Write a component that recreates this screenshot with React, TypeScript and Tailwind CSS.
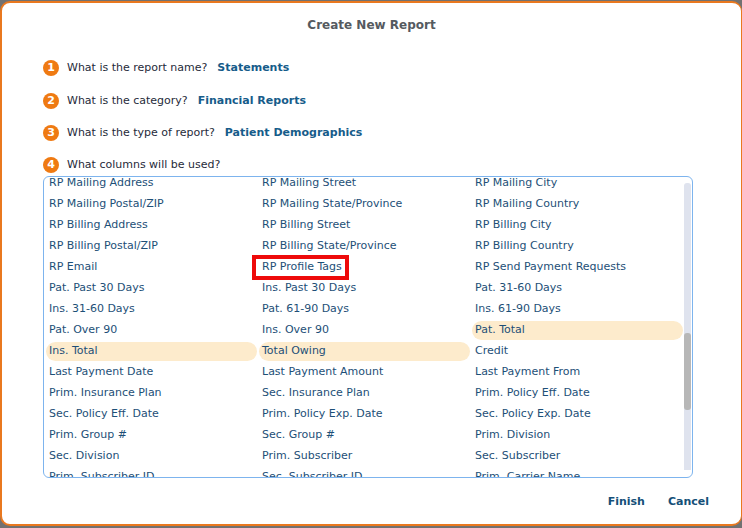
import React from 'react'

const font = { fontFamily: '"DejaVu Sans", Verdana, sans-serif' }

const questions = [
  { q: 'What is the report name?', a: 'Statements', gap: '' },
  { q: 'What is the category?', a: 'Financial Reports', gap: 'mt-[17px]' },
  { q: 'What is the type of report?', a: 'Patient Demographics', gap: 'mt-[16px]' },
  { q: 'What columns will be used?', a: '', gap: 'mt-[16px]' },
]

const columns = [
  'RP Mailing Address', 'RP Mailing Street', 'RP Mailing City',
  'RP Mailing Postal/ZIP', 'RP Mailing State/Province', 'RP Mailing Country',
  'RP Billing Address', 'RP Billing Street', 'RP Billing City',
  'RP Billing Postal/ZIP', 'RP Billing State/Province', 'RP Billing Country',
  'RP Email', 'RP Profile Tags', 'RP Send Payment Requests',
  'Pat. Past 30 Days', 'Ins. Past 30 Days', 'Pat. 31-60 Days',
  'Ins. 31-60 Days', 'Pat. 61-90 Days', 'Ins. 61-90 Days',
  'Pat. Over 90', 'Ins. Over 90', 'Pat. Total',
  'Ins. Total', 'Total Owing', 'Credit',
  'Last Payment Date', 'Last Payment Amount', 'Last Payment From',
  'Prim. Insurance Plan', 'Sec. Insurance Plan', 'Prim. Policy Eff. Date',
  'Sec. Policy Eff. Date', 'Prim. Policy Exp. Date', 'Sec. Policy Exp. Date',
  'Prim. Group #', 'Sec. Group #', 'Prim. Division',
  'Sec. Division', 'Prim. Subscriber', 'Sec. Subscriber',
  'Prim. Subscriber ID', 'Sec. Subscriber ID', 'Prim. Carrier Name',
]

const selected = ['Pat. Total', 'Ins. Total', 'Total Owing']

export default function App() {
  return (
    <div className="w-[742px] h-[528px] bg-[#717171] pt-px overflow-hidden" style={font}>
      <div className="w-[742px] h-[525px] bg-white border-2 border-r border-[#e9781f] rounded-[10px] flex flex-col">
        {/* Title */}
        <div className="pt-[14px] h-[30px] leading-[16px] text-center text-[12px] font-bold text-[#555a60]">
          Create New Report
        </div>

        {/* Questions */}
        <div className="mt-[27px] pl-[41px] flex flex-col">
          {questions.map((item, i) => (
            <div key={i} className={`flex items-center h-[16px] text-[11px] ${item.gap}`}>
              <span className="w-[16px] h-[16px] rounded-full bg-[#ef7a12] text-white text-[11px] font-bold flex items-center justify-center">
                {i + 1}
              </span>
              <span className="ml-[8px] text-[#1f2b3a]">{item.q}</span>
              {item.a && (
                <span className="ml-[10px] font-bold text-[#165c8a]">{item.a}</span>
              )}
            </div>
          ))}
        </div>

        {/* Column list */}
        <div className="mt-[3px] ml-[41px] w-[650px] h-[302px] border border-[#7db4ee] rounded-[6px] flex overflow-hidden">
          <div className="flex-1 overflow-hidden pl-[2px]">
            <div className="-mt-[4px] grid grid-cols-[213px_213px_213px]">
              {columns.map((c) => (
                <div key={c} className="h-[21px] flex items-center">
                  <div
                    className={
                      selected.includes(c)
                        ? 'w-[211px] h-[19px] rounded-full bg-[#fdebcc] pl-[3px] flex items-center text-[11px] text-[#1d4f77]'
                        : 'w-[211px] h-[19px] pl-[3px] flex items-center text-[11px] text-[#1d4f77]'
                    }
                  >
                    {c === 'RP Profile Tags' ? (
                      <span className="relative">
                        {c}
                        <span className="absolute -left-[10px] -right-[7px] -top-[4px] -bottom-[4px] border-4 border-[#ee0a0a]" />
                      </span>
                    ) : (
                      c
                    )}
                  </div>
                </div>
              ))}
            </div>
          </div>
          <div className="w-[7px] mr-px mt-[6px] mb-[7px] bg-[#dfe3ee] rounded-t-[3px] relative">
            <div className="absolute left-0 right-0 top-[150px] h-[77px] bg-[#b7b7b7] rounded-[3px]" />
          </div>
        </div>

        {/* Footer */}
        <div className="mt-[16px] pr-[32px] flex justify-end gap-[23px] text-[11px] font-bold text-[#154f78]">
          <span>Finish</span>
          <span>Cancel</span>
        </div>
      </div>
    </div>
  )
}
